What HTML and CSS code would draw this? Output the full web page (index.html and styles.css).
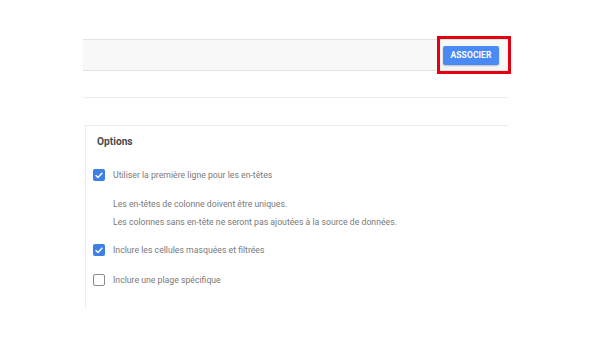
FILE: index.html
```html
<!DOCTYPE html>
<html lang="fr">
<head>
<meta charset="utf-8">
<link rel="stylesheet" href="styles.css">
</head>
<body>
<div class="page">
  <div class="toolbar">
    <div class="btn-wrap">
      <button class="btn">ASSOCIER</button>
      <span class="highlight"></span>
    </div>
  </div>
  <div class="divider"></div>
  <section class="card">
    <h2 class="title">Options</h2>
    <div class="row">
      <span class="cb checked"><svg viewBox="0 0 12 12" width="12" height="12"><path d="M2.6 6.2 L5 8.4 L9.4 3.8" fill="none" stroke="#fff" stroke-width="1.4"/></svg></span>
      <span class="label">Utiliser la première ligne pour les en-têtes</span>
    </div>
    <div class="note">
      <p>Les en-têtes de colonne doivent être uniques.</p>
      <p>Les colonnes sans en-tête ne seront pas ajoutées à la source de données.</p>
    </div>
    <div class="row">
      <span class="cb checked"><svg viewBox="0 0 12 12" width="12" height="12"><path d="M2.6 6.2 L5 8.4 L9.4 3.8" fill="none" stroke="#fff" stroke-width="1.4"/></svg></span>
      <span class="label">Inclure les cellules masquées et filtrées</span>
    </div>
    <div class="row">
      <span class="cb"></span>
      <span class="label">Inclure une plage spécifique</span>
    </div>
  </section>
</div>
</body>
</html>
```
FILE: styles.css
```css
* { box-sizing: border-box; }
html, body { margin: 0; padding: 0; background: #fff; }
body { font-family: Roboto, "Liberation Sans", Arial, sans-serif; color: #757575; }
.page { margin-left: 83px; width: 425px; padding-top: 39px; }
.toolbar {
  height: 32px;
  border-top: 1px solid #e2e2e2;
  border-bottom: 1px solid #e2e2e2;
  background: #f8f8f8;
  display: flex;
  justify-content: flex-end;
  align-items: center;
  padding-right: 9px;
}
.btn-wrap { position: relative; display: flex; }
.btn {
  width: 56px;
  height: 19px;
  border: 0;
  border-radius: 2px;
  background: #4a8af4;
  color: #fff;
  font-family: Roboto, "Liberation Sans", Arial, sans-serif;
  font-weight: 700;
  font-size: 8.5px;
  letter-spacing: 0.1px;
  padding: 0;
  box-shadow: 0 1px 2px rgba(0,0,0,0.25);
}
.highlight {
  position: absolute;
  left: -6px; right: -12px; top: -10px; bottom: -9px;
  border: 3px solid #e3000f;
}
.divider { height: 1px; background: #ececec; margin-top: 26px; }
.card {
  margin-top: 27px;
  margin-left: 2px;
  border-top: 1px solid #ececec;
  border-left: 1px solid #ececec;
  padding: 8px 0 19px 7px;
}
.title {
  margin: 0 0 15px 4px;
  font-size: 10.2px;
  line-height: 16px;
  font-weight: 700;
  color: #4a4a4a;
}
.row { display: flex; align-items: center; height: 20px; gap: 8px; }
.row + .note { margin-top: 10px; }
.note + .row { margin-top: 9px; }
.row + .row { margin-top: 10px; }
.cb {
  width: 12px; height: 12px;
  border-radius: 2px;
  border: 1.5px solid #8a8a8a;
  display: inline-block;
  flex: none;
}
.cb.checked { background: #3f7fe8; border: 0; }
.cb svg { display: block; }
.label, .note p { font-size: 8.7px; color: #7a7a7a; }
.note { padding-left: 20px; }
.note p { margin: 0; line-height: 18px; }
```
